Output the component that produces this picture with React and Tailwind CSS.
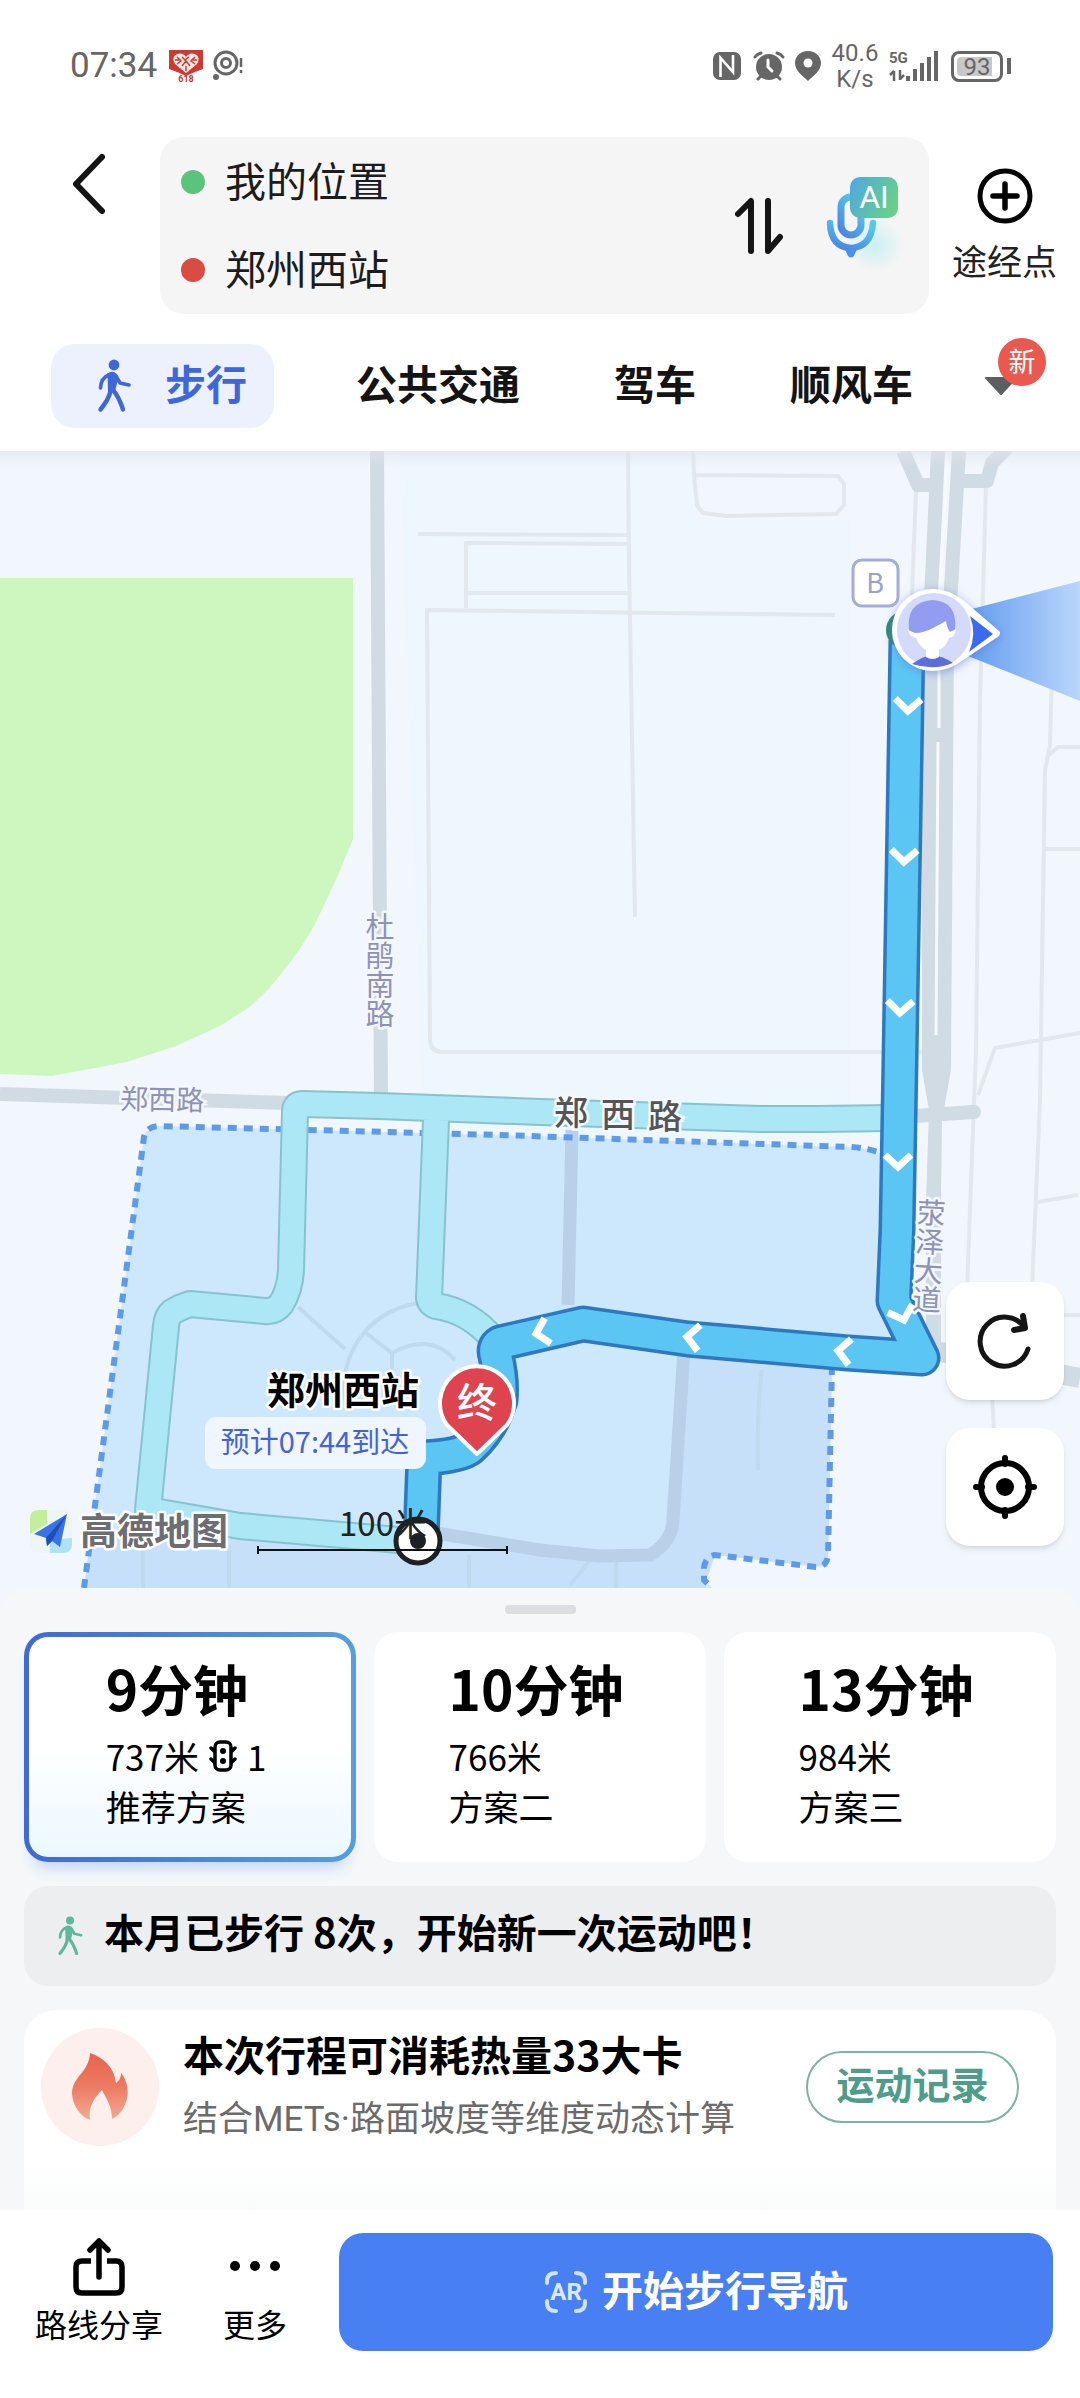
import React, { useState } from 'react';

// =========================================
// Data
// =========================================
const TABS = ['公共交通', '驾车', '顺风车'];

const PLANS = [
    { id: 1, time: '9分钟', distance: '737米', lights: 1, name: '推荐方案' },
    { id: 2, time: '10分钟', distance: '766米', name: '方案二' },
    { id: 3, time: '13分钟', distance: '984米', name: '方案三' },
];

// position and heading of the arrows drawn along the route
const ROUTE_ARROWS = [
    [908, 708, 2],
    [904, 859, 2],
    [900, 1010, 2],
    [898, 1164, 0],
    [903, 1317, -18],
    [841, 1351, 96],
    [690, 1337, 96],
    [539, 1333, 76],
];

const MAP_ROUTE =
    'M907 640 L900 1060 L897 1230 L894 1301 L922 1358 L848 1353 L688 1339 L583 1324 L500 1343 Q493 1347 496 1356 Q502 1380 500 1400 Q492 1428 470 1448 Q460 1456 424 1458 L421 1540';
const MAP_ALT_LEFT =
    'M890 1118 L820 1119 L760 1119 L540 1112 L379 1106 L302 1104 Q295 1104 295 1112 L291 1270 Q290 1290 281 1304 Q275 1312 265 1311 L190 1304 Q180 1307 172 1312 Q167 1316 166 1326 L148 1510 L240 1526 L410 1541';
const MAP_ALT_RIGHT = 'M436 1120 L429 1298 Q430 1304 436 1306 Q470 1311 494 1340';
const STATION_BORDER =
    'M84 1588 L144 1137 Q146 1127 158 1126 L500 1135 L850 1147 Q870 1148 882 1154';

// =========================================
// Icons
// =========================================
const WalkIcon = ({ className }) => (
    <svg viewBox="0 0 36 54" className={className} fill="none" stroke="currentColor" strokeLinecap="round" strokeLinejoin="round" aria-hidden="true">
        <circle cx="18" cy="6" r="5.4" fill="currentColor" stroke="none" />
        <path d="M11.500 14.500 Q17 11 20.500 15 L22 20 L19 33 L12 33 Z" fill="currentColor" stroke="none" />
        <path d="M12.500 16 Q5 19 4.500 29" strokeWidth="3.600" />
        <path d="M20 17 L24 24 L33 26" strokeWidth="3.600" />
        <path d="M14.500 32 Q13 40 4.500 50.500" strokeWidth="4.400" />
        <path d="M17 31 Q23 38 27 50.500" strokeWidth="4.400" />
    </svg>
);

const BackIcon = () => (
    <svg viewBox="0 0 36 62" className="w-9 h-[62px]" fill="none" stroke="#151515" strokeWidth="6" strokeLinecap="round" strokeLinejoin="round" aria-hidden="true">
        <path d="M31 4 L5 31 L31 58" />
    </svg>
);

const SwapIcon = () => (
    <svg viewBox="0 0 48 58" className="w-12 h-[58px]" fill="none" stroke="#151515" strokeWidth="6" strokeLinecap="round" strokeLinejoin="round" aria-hidden="true">
        <path d="M3 17 L16 4 V54" />
        <path d="M33 4 V54 L45 40" />
    </svg>
);

const AiMicIcon = () => (
    <svg viewBox="0 0 80 100" className="w-20 h-[100px]" fill="none" aria-hidden="true">
        <defs>
            <linearGradient id="mic" x1="0" y1="1" x2="0.600" y2="0">
                <stop offset="0" stopColor="#4a80e0" />
                <stop offset="1" stopColor="#55c8ef" />
            </linearGradient>
            <linearGradient id="ai" x1="0" y1="0" x2="1" y2="0.400">
                <stop offset="0" stopColor="#4fa6e6" />
                <stop offset="1" stopColor="#66cf8d" />
            </linearGradient>
            <radialGradient id="micGlow">
                <stop offset="0" stopColor="#bfeef0" stopOpacity="0.800" />
                <stop offset="1" stopColor="#bfeef0" stopOpacity="0" />
            </radialGradient>
        </defs>
        <circle cx="50" cy="72" r="28" fill="url(#micGlow)" />
        <rect x="16" y="24" width="20" height="38" rx="10" stroke="url(#mic)" strokeWidth="7" />
        <path d="M5 50 Q6 74 26 75 Q46 74 48 50" stroke="url(#mic)" strokeWidth="6.500" strokeLinecap="round" />
        <path d="M20 76 H32 L29 83 Q26 86 23 83 Z" fill="#4c90e6" />
        <rect x="25" y="4" width="48" height="41" rx="10" fill="url(#ai)" />
        <text x="49" y="35" textAnchor="middle" fontFamily="Roboto, sans-serif" fontSize="32" fill="#fff">AI</text>
    </svg>
);

const AddIcon = () => (
    <svg viewBox="0 0 56 56" className="w-14 h-14" fill="none" stroke="#050505" strokeWidth="5" strokeLinecap="round" aria-hidden="true">
        <circle cx="28" cy="28" r="25" />
        <path d="M28 16 V40 M16 28 H40" strokeWidth="5.500" />
    </svg>
);

const TrafficLightIcon = () => (
    <svg viewBox="0 0 28 32" className="w-7 h-8" fill="none" stroke="#000" strokeWidth="3.500" strokeLinecap="round" aria-hidden="true">
        <rect x="6" y="2" width="16" height="28" rx="5" />
        <path d="M5 11 L2 8 M5 22 L2 19 M23 11 L26 8 M23 22 L26 19" />
        <circle cx="14" cy="11" r="3" fill="#000" stroke="none" />
        <circle cx="14" cy="21" r="3" fill="#000" stroke="none" />
    </svg>
);

const FlameIcon = () => (
    <svg viewBox="0 0 56 68" className="w-14 h-[68px]" aria-hidden="true">
        <defs>
            <linearGradient id="flame" x1="0" y1="0" x2="0" y2="1">
                <stop offset="0" stopColor="#e8634c" />
                <stop offset="0.500" stopColor="#ec7a62" />
                <stop offset="1" stopColor="#f3ab93" />
            </linearGradient>
        </defs>
        <path d="M18 0 C32 5 42 14 44 30 C47 28 49 25 49 20 C56 28 57 40 54 49 C51 58 46 63 40 66 C40 54 35 47 30 37 C22 45 16 54 18 67 C8 63 1 53 0 41 C0 23 17 20 18 0 Z" fill="url(#flame)" />
    </svg>
);

const ShareIcon = () => (
    <svg viewBox="0 0 56 60" className="w-14 h-[60px]" fill="none" stroke="#000" strokeWidth="5.500" strokeLinecap="round" strokeLinejoin="round" aria-hidden="true">
        <path d="M20 24 H11 Q5 24 5 30 V50 Q5 56 11 56 H45 Q51 56 51 50 V30 Q51 24 45 24 H36" strokeLinecap="butt" />
        <path d="M28 40 V5 M19 13 L28 4 L37 13" />
    </svg>
);

const MoreIcon = () => (
    <svg viewBox="0 0 56 60" className="w-14 h-[60px]" aria-hidden="true">
        <circle cx="8" cy="29" r="5" />
        <circle cx="28" cy="29" r="5" />
        <circle cx="48" cy="29" r="5" />
    </svg>
);

const ArIcon = () => (
    <svg viewBox="0 0 44 44" className="w-11 h-11" fill="none" stroke="#cfe2ff" strokeWidth="4" strokeLinecap="round" aria-hidden="true">
        <path d="M3 13 V11 Q3 3 12 3 M32 3 Q41 3 41 11 V13 M41 31 V33 Q41 41 32 41 M12 41 Q3 41 3 33 V31" />
        <text x="22" y="30" textAnchor="middle" fontFamily="Roboto, sans-serif" fontWeight="700" fontSize="24" fill="#dbe9ff" stroke="none">AR</text>
    </svg>
);

const RefreshIcon = () => (
    <svg viewBox="0 0 56 56" className="w-14 h-14" fill="none" stroke="#151515" strokeWidth="5" strokeLinecap="round" strokeLinejoin="round" aria-hidden="true">
        <path d="M51 36 A24.500 24.500 0 1 1 48 15" />
        <path d="M46 3 L48 15 L37 17" strokeWidth="6" />
    </svg>
);

const LocateIcon = () => (
    <svg viewBox="0 0 64 64" className="w-16 h-16" fill="none" stroke="#000" strokeWidth="6" strokeLinecap="round" aria-hidden="true">
        <circle cx="32" cy="32" r="24" />
        <circle cx="32" cy="32" r="9" fill="#000" stroke="none" />
        <path d="M32 3 V9 M32 55 V61 M3 32 H9 M55 32 H61" />
    </svg>
);

// =========================================
// Status bar
// =========================================
const StatusBar = () => (
    <div className="flex items-center justify-between pt-9 pl-[70px] pr-[69px] font-[Roboto,sans-serif] text-[#666]">
        <div className="flex items-center h-[60px]">
            <span className="text-[35px] leading-10 w-[98px]">07:34</span>
            <svg viewBox="0 0 36 34" className="w-9 h-[34px]" aria-hidden="true">
                <path d="M1 1 H35 V20 L27 23 L18 27 L9 23 L1 20 Z" fill="#cf3a30" />
                <path d="M18 24 L7 15 Q3 8 9 5 Q15 3 18 8 Q21 3 27 5 Q33 8 29 15 Z" fill="#fbe9e6" />
                <path d="M9 8 L13 12 L9 15 M27 8 L23 12 L27 15 M14 17 L18 12 L22 17 M18 17 V22 M7 11 H11 M25 11 H29 M14 8 L17 11 L21 8" fill="none" stroke="#cf3a30" strokeWidth="1.500" />
                <text x="18" y="33" textAnchor="middle" fontSize="9" fontWeight="700" fill="#b8392f">618</text>
            </svg>
            <svg viewBox="0 0 32 32" className="w-8 h-8 ml-2" fill="none" stroke="#666" aria-hidden="true">
                <circle cx="14" cy="13" r="11" strokeWidth="3" />
                <circle cx="14" cy="13" r="4.500" strokeWidth="3" />
                <circle cx="4" cy="27" r="3" fill="#666" stroke="none" />
                <path d="M29 8 V17 M29 20 V23" strokeWidth="2.500" />
            </svg>
        </div>
        <div className="flex items-center h-[60px]">
            <svg viewBox="0 0 28 28" className="w-7 h-7" aria-hidden="true">
                <rect width="28" height="28" rx="7" fill="#666" />
                <path d="M7.500 25 V6 L20 20 V3" fill="none" stroke="#fff" strokeWidth="2.600" />
            </svg>
            <svg viewBox="0 0 32 30" className="w-8 h-[30px] ml-3" fill="none" stroke="#666" strokeWidth="3" strokeLinecap="round" aria-hidden="true">
                <circle cx="16" cy="16" r="13" fill="#666" stroke="none" />
                <path d="M2 6 Q4 3 8 2 M24 2 Q28 3 30 6 M5 28 L8 25 M27 28 L24 25" />
                <path d="M15 9 V16 L19 20" stroke="#fff" />
            </svg>
            <svg viewBox="0 0 26 30" className="w-[26px] h-[30px] ml-[10px]" aria-hidden="true">
                <path d="M13 0 C5 0 0 6 0 12 C0 20 8 25 13 30 C18 25 26 20 26 12 C26 6 21 0 13 0 Z" fill="#666" />
                <circle cx="13" cy="12" r="4.500" fill="#fff" />
            </svg>
            <div className="ml-[10px] w-[48px] text-center text-[24px] leading-[26px]">
                <div>40.6</div>
                <div>K/s</div>
            </div>
            <svg viewBox="0 0 50 32" className="w-[50px] h-8 ml-[10px]" fill="none" stroke="#666" strokeWidth="4" aria-hidden="true">
                <text x="0" y="13" fontSize="15" fontWeight="700" fill="#666" stroke="none">5G</text>
                <path d="M5 21 V31 M11 20 V30" strokeWidth="2.500" />
                <path d="M5 21 L1 25 M11 29 L15 25" strokeWidth="2.500" />
                <path d="M19 31 V26 M26 31 V19 M33 31 V13 M40 31 V7 M47 31 V1" />
            </svg>
            <div className="ml-3 flex items-center gap-1">
                <div className="w-[52px] h-[31px] rounded-lg border-[3px] border-[#666] p-[3px]">
                    <div className="h-[19px] rounded-sm bg-[linear-gradient(90deg,#c8c8c8_88%,#fff_88%)] text-center text-[24px] leading-[20px]">93</div>
                </div>
                <span className="w-1 h-4 bg-[#666]" />
            </div>
        </div>
    </div>
);

// =========================================
// Header: route form and travel modes
// =========================================
const PlaceField = ({ label, dotClass, value, onChange }) => (
    <label className="flex items-center h-[88px] pl-[21px]">
        <span className={`w-6 h-6 rounded-full ${dotClass}`} />
        <input
            type="text"
            aria-label={label}
            value={value}
            onChange={onChange}
            className="ml-[20px] w-[400px] pb-[6px] bg-transparent text-[41px] leading-[60px] text-[#1c1c1c] focus:outline-none"
        />
    </label>
);

const RouteForm = () => {
    const [from, setFrom] = useState('我的位置');
    const [to, setTo] = useState('郑州西站');

    const swap = () => {
        setFrom(to);
        setTo(from);
    };

    return (
        <div className="flex mt-[41px]">
            <button type="button" aria-label="返回" className="w-40 h-[94px] pl-[71px]">
                <BackIcon />
            </button>
            <div className="flex-1 flex items-center h-[177px] rounded-[24px] bg-[#f5f5f5]">
                <div className="flex-1">
                    <PlaceField label="起点" dotClass="bg-[#5bc37b]" value={from} onChange={(e) => setFrom(e.target.value)} />
                    <PlaceField label="终点" dotClass="bg-[#db4c40]" value={to} onChange={(e) => setTo(e.target.value)} />
                </div>
                <button type="button" aria-label="交换起终点" onClick={swap}>
                    <SwapIcon />
                </button>
                <button type="button" aria-label="AI语音" className="ml-[42px] mr-6 pb-[6px]">
                    <AiMicIcon />
                </button>
            </div>
            <button type="button" className="w-[151px] flex flex-col items-center justify-center gap-3">
                <AddIcon />
                <span className="text-[35px] leading-[48px] text-[#222]">途经点</span>
            </button>
        </div>
    );
};

const ModeTabs = () => (
    <nav className="flex items-center mt-[30px] pl-[51px] pb-[23px] text-[41px] leading-[60px] font-bold text-[#141414]">
        <button type="button" className="flex items-center gap-[33px] h-[84px] pl-[45px] pr-[27px] mr-[35px] rounded-[24px] bg-[#edf1fd] text-[#3f67d8]">
            <WalkIcon className="w-9 h-[54px]" />
            <span className="pb-2">步行</span>
        </button>
        {TABS.map((tab) => (
            <button key={tab} type="button" className="px-[47px] pb-2">
                {tab}
            </button>
        ))}
        <button type="button" aria-label="更多出行方式" className="relative ml-6 w-[70px] h-[84px]">
            <svg viewBox="0 0 34 18" className="w-[34px] h-[18px]" aria-hidden="true">
                <path d="M2 1 H32 L17 17 Z" fill="#5d5e62" stroke="#5d5e62" strokeWidth="2" strokeLinejoin="round" />
            </svg>
            <span className="absolute top-[-6px] left-[14px] w-12 h-12 rounded-full bg-[#e95950] text-white text-[27px] leading-[46px] font-normal">新</span>
        </button>
    </nav>
);

// =========================================
// Map
// =========================================
const VerticalLabel = ({ children, x, y, angle = 0 }) => (
    <text
        x={x}
        y={y}
        transform={`rotate(${angle} ${x} ${y})`}
        className="[writing-mode:vertical-rl]"
        fontSize="29"
        fill="#8d93b6"
        stroke="#f4f8fe"
        strokeWidth="5"
        paintOrder="stroke"
        strokeLinejoin="round"
    >
        {children}
    </text>
);

const MapCanvas = () => (
    <svg viewBox="0 451 1080 1165" className="block w-full h-auto" fill="none" role="img" aria-label="步行路线地图">
        <defs>
            <linearGradient id="cone" x1="0" y1="0" x2="1" y2="0">
                <stop offset="0" stopColor="#5d98ee" />
                <stop offset="1" stopColor="#bad7fc" />
            </linearGradient>
            <filter id="markerGlow" x="-30%" y="-30%" width="160%" height="160%">
                <feDropShadow dx="0" dy="2" stdDeviation="5" floodColor="#5a78d8" floodOpacity="0.600" />
            </filter>
        </defs>

        <rect y="451" width="1080" height="1165" fill="#f2f7fe" />
        <path d="M400 451 H700 V520 H850 V1160 H425 Z" fill="#eef6fe" />
        <path d="M0 578 H353 V839 L336 880 L315 924 Q302 948 284 970 Q268 992 248 1008 L220 1026 L176 1046 L127 1062 L52 1076 L0 1074 Z" fill="#cdf7bf" />

        {/* small streets */}
        <g stroke="#e2e8ed" strokeWidth="4" strokeLinejoin="round">
            <path d="M418 534 L628 535 M628 544 L466 543 V608 M466 593 H628" />
            <path d="M835 615 L427 610 L430 1040 Q431 1052 442 1052 H922" />
            <path d="M628 451 L629 560 L635 917" />
            <path d="M693 451 L694 475 L697 505 L703 513 L727 516 L836 514 L844 505 V484 L838 476 L694 475" />
            <path d="M916 490 L911 620 M986 485 L980 700 L976 1050 L967 1290" />
            <path d="M1080 652 L1058 655 Q1052 658 1052 668 L1050 745 L1045 770 L1040 1100 L1032 1290" />
            <path d="M1080 747 H1058 L1048 756 M1042 849 H1080 M1080 1033 L995 1048 L978 1095 M1038 1202 L1078 1195" />
            <path d="M1060 1315 H1080 M992 1395 L994 1430" />
        </g>

        {/* main roads */}
        <g stroke="#d1dbe4" strokeWidth="14" strokeLinejoin="round">
            <path d="M377 451 L381 1100 M0 1094 L290 1103 M915 1116 L973 1112" />
            <path d="M903 451 L918 485 H932 M1008 447 L992 463 L987 481 H964" />
            <path d="M938 451 L929 640 V690 M959 451 L948 640" />
            <path d="M930 1350 L1080 1378" strokeWidth="20" />
            <path d="M973 1112 h1" strokeLinecap="round" />
        </g>
        <path d="M922 640 H954 L951 1070 L942 1120 L941 1200 V1360 H926 V1200 L929 1110 L922 1070 Z" fill="#d1dbe4" />
        <path d="M948 451 L939 600 V728 M938 742 L936 1035" stroke="#f6f9fd" strokeWidth="3" />

        {/* station grounds */}
        <path d={`${STATION_BORDER} L890 1340 L832 1366 L828 1555 Q827 1567 816 1567 L715 1555 Q705 1557 704 1568 V1580 L712 1588 Z`} fill="#cde7fc" />
        <path d="M690 1345 L832 1360 L828 1567 L715 1555 L704 1588 H84 L92 1530 L420 1548 L650 1556 L672 1545 Z" fill="#c7e0fa" />
        <g stroke="#bfd9ee" strokeWidth="4">
            <path d="M298 1307 L345 1349 M366 1333 L392 1353 M762 1370 Q757 1400 758 1470 M143 1530 V1588 M229 1545 V1588 M469 1555 V1588 M616 1560 V1588 M590 1560 L570 1585" />
            <path d="M345 1400 A85 85 0 0 1 420 1303 M392 1400 V1353 Q430 1332 455 1360" />
        </g>
        <g stroke="#b8d1e9" strokeWidth="13" strokeLinejoin="round">
            <path d="M572 1130 L568 1305" />
            <path d="M684 1350 L673 1520 Q672 1542 650 1555 L600 1556 L540 1550 L430 1532" />
        </g>
        <path d={STATION_BORDER} stroke="#5e9be6" strokeWidth="6" strokeDasharray="9 7" />
        <path d="M832 1366 L828 1555 Q827 1567 816 1567 L715 1555 Q705 1557 704 1568 V1580 L712 1588" stroke="#5e9be6" strokeWidth="6" strokeDasharray="9 7" />

        {/* alternative routes */}
        <g strokeLinejoin="round">
            <path d={MAP_ALT_LEFT} stroke="#86c3cf" strokeWidth="28" />
            <path d={MAP_ALT_RIGHT} stroke="#86c3cf" strokeWidth="28" />
            <path d={MAP_ALT_LEFT} stroke="#ace7f5" strokeWidth="24" />
            <path d={MAP_ALT_RIGHT} stroke="#ace7f5" strokeWidth="24" />
        </g>

        {/* selected route */}
        <g strokeLinejoin="round">
            <path d={MAP_ROUTE} stroke="#2d78bf" strokeWidth="37" />
            <path d={MAP_ROUTE} stroke="#5bc6f4" strokeWidth="30" />
        </g>
        <g stroke="#fff" strokeWidth="7">
            {ROUTE_ARROWS.map(([x, y, angle]) => (
                <path key={y} d="M-13 -9 L0 3 L13 -9" transform={`translate(${x} ${y}) rotate(${angle})`} />
            ))}
        </g>

        {/* road names */}
        <VerticalLabel x={380} y={912}>杜鹃南路</VerticalLabel>
        <VerticalLabel x={932} y={1198} angle={3}>荥泽大道</VerticalLabel>
        <text x="120" y="1109" transform="rotate(1 120 1109)" fontSize="28" fill="#8d93b6" stroke="#f4f8fe" strokeWidth="5" paintOrder="stroke">郑西路</text>
        <g fontSize="34" fontWeight="500" fill="#555" stroke="#f4f8fe" strokeWidth="5" paintOrder="stroke" textAnchor="middle">
            <text x="571" y="1125">郑</text>
            <text x="618" y="1127">西</text>
            <text x="665" y="1129">路</text>
        </g>

        {/* start point and current position */}
        <path d="M960 612 L1080 581 V701 L968 656 Z" fill="url(#cone)" />
        <circle cx="905" cy="630" r="19" fill="#2f8a6c" />
        <g transform="translate(-2 0)">
            <path d="M935 589 A41 41 0 1 0 935 671 Q950 671 965 660 L1001 636 Q1003 633 1001 631 L965 600 Q950 589 935 589 Z" fill="#fff" filter="url(#markerGlow)" />
            <path d="M972 616 L995 634 L971 652 Q979 634 972 616 Z" fill="#3b6af0" />
            <circle cx="936" cy="630" r="37" fill="#d4dafa" />
            <path d="M914 664 Q925 656 934 655 Q945 656 955 663 Q936 671 914 664 Z" fill="#5d6edb" />
            <path d="M911 630 Q908 602 934 600 Q960 601 957 630 Q957 638 950 638 H918 Q912 637 911 630 Z" fill="#929df0" />
            <path d="M910 630 L917 633 Q926 633 937 627 L948 621 Q949 628 952 632 L958 629 Q957 638 951 638 Q948 647 941 650 V657 Q934 661 928 657 V650 Q921 646 918 638 Q912 638 910 630 Z" fill="#fff" />
        </g>
        <rect x="853" y="560" width="45" height="46" rx="9" fill="#fff" stroke="#a3add8" strokeWidth="3" />
        <text x="875" y="593" textAnchor="middle" fontSize="27" fill="#98a2cc">B</text>

        {/* destination */}
        <text x="267" y="1404" fontSize="38" fontWeight="700" fill="#000" stroke="#fff" strokeWidth="5" paintOrder="stroke" strokeLinejoin="round">郑州西站</text>
        <rect x="205" y="1417" width="221" height="52" rx="11" fill="#eff6fe" />
        <text x="315" y="1453" textAnchor="middle" fontSize="29" fill="#4663d6">预计07:44到达</text>
        <path d="M477 1454 L447 1425 A37 37 0 1 1 507 1425 Z" fill="#de4350" stroke="#fff" strokeWidth="4" strokeLinejoin="round" />
        <text x="477" y="1417" textAnchor="middle" fontSize="40" fontWeight="500" fill="#fff">终</text>

        {/* scale and brand */}
        <circle cx="418" cy="1541" r="22" fill="#fff" stroke="#1d2125" strokeWidth="5" />
        <circle cx="418" cy="1541" r="8" fill="#1d2125" />
        <text x="339" y="1536" fontSize="33" fill="#222">100米</text>
        <path d="M257 1550 H508 M258 1546 V1554 M507 1546 V1554" stroke="#111" strokeWidth="2" />
        <rect x="30" y="1510" width="42" height="43" rx="9" fill="#edf6f4" />
        <path d="M30 1534 V1519 Q30 1510 39 1510 H47 V1524 Z" fill="#c3ef9d" />
        <path d="M50 1553 V1540 L72 1538 V1544 Q72 1553 63 1553 Z" fill="#aee3f6" />
        <path d="M67 1514 L34 1534 L46 1538 L47 1546 L52 1541 L60 1547 Z" fill="#3874e6" />
        <path d="M67 1514 L46 1538 L47 1546 L52 1541 Z" fill="#1d50b4" />
        <text x="80" y="1545" fontSize="37" fontWeight="700" fill="#6c6e72" stroke="#fff" strokeWidth="5" paintOrder="stroke" strokeLinejoin="round">高德地图</text>
    </svg>
);

const MapView = () => (
    <section className="relative">
        <MapCanvas />
        <div className="absolute inset-x-0 top-0 h-4 bg-linear-to-b from-[#dfe3ec] to-transparent opacity-60" />
        <div className="absolute right-4 bottom-[70px] flex flex-col gap-7">
            <button type="button" aria-label="刷新路线" className="w-[118px] h-[118px] flex items-center justify-center rounded-[24px] bg-white shadow-md">
                <RefreshIcon />
            </button>
            <button type="button" aria-label="定位" className="w-[118px] h-[118px] flex items-center justify-center rounded-[24px] bg-white shadow-md">
                <LocateIcon />
            </button>
        </div>
    </section>
);

// =========================================
// Bottom sheet
// =========================================
const PlanCard = ({ plan, selected, onSelect }) => (
    <button
        type="button"
        aria-pressed={selected}
        onClick={onSelect}
        className={`flex-1 h-[230px] flex justify-center rounded-[24px] border-[5px] border-transparent pt-[6px] pr-2 text-left text-black ${
            selected
                ? '[background:linear-gradient(180deg,#fff_50%,#ecf8ff)_padding-box,linear-gradient(90deg,#4169d6,#559fdc)_border-box] shadow-[0_14px_14px_-8px_#c3d6f8]'
                : 'bg-white'
        }`}
    >
        <span className="block">
            <span className="block text-[55px] leading-[88px] font-bold">{plan.time}</span>
            <span className="flex items-center text-[35px] leading-[50px]">
                {plan.distance}
                {plan.lights && (
                    <>
                        <span className="mx-[10px]"><TrafficLightIcon /></span>
                        {plan.lights}
                    </>
                )}
            </span>
            <span className="block text-[35px] leading-[50px]">{plan.name}</span>
        </span>
    </button>
);

const CalorieCard = () => (
    <div className="mt-6 flex items-start h-[200px] pt-3 pl-[17px] pr-[37px] rounded-t-[32px] bg-[linear-gradient(#fff_75%,#fafbfb)]">
        <div className="mt-[6px] w-[118px] h-[118px] shrink-0 flex items-center justify-center rounded-full bg-[#fcefec]">
            <FlameIcon />
        </div>
        <div className="ml-[24px] flex-1">
            <h2 className="text-[41px] leading-[62px] font-bold text-black">本次行程可消耗热量33大卡</h2>
            <p className="text-[35px] leading-[64px] text-[#6b6b6b]">
                结合<span className="font-[Roboto,sans-serif]">METs·</span>路面坡度等维度动态计算
            </p>
        </div>
        <button type="button" className="mt-[29px] w-[213px] h-[72px] pb-2 shrink-0 rounded-full border-2 border-[#7db3a4] text-[38px] leading-[60px] font-bold text-[#4d9d8a]">
            运动记录
        </button>
    </div>
);

const RouteSheet = () => {
    const [selectedId, setSelectedId] = useState(1);

    return (
        <section className="relative -mt-7 px-6 rounded-t-[28px] bg-[#f5f7f9]">
            <div className="pt-[17px] pb-[18px]">
                <div className="mx-auto w-[71px] h-[9px] rounded bg-[#dcdee1]" />
            </div>
            <div className="flex gap-[18px]">
                {PLANS.map((plan) => (
                    <PlanCard
                        key={plan.id}
                        plan={plan}
                        selected={plan.id === selectedId}
                        onSelect={() => setSelectedId(plan.id)}
                    />
                ))}
            </div>
            <div className="mt-6 flex items-center h-[100px] pl-8 rounded-[24px] bg-[#eceeef]">
                <WalkIcon className="w-[28px] h-[40px] text-[#5fb89c]" />
                <p className="ml-5 pb-[10px] text-[40px] leading-[60px] font-bold text-black">本月已步行 8次，开始新一次运动吧！</p>
            </div>
            <CalorieCard />
        </section>
    );
};

const ActionBar = () => (
    <footer className="flex pt-[23px] pb-12 pl-[35px] pr-[27px] bg-white text-[32px] leading-[44px] text-black">
        <button type="button" className="w-32 h-[118px] flex flex-col items-center gap-1 pt-1">
            <ShareIcon />
            路线分享
        </button>
        <button type="button" className="w-16 h-[118px] ml-[60px] flex flex-col items-center gap-1 pt-1">
            <MoreIcon />
            更多
        </button>
        <button type="button" className="ml-[52px] flex-1 h-[118px] flex items-center justify-center gap-[14px] rounded-[24px] bg-[#4880f3] text-[41px] leading-[60px] font-bold text-white">
            <ArIcon />
            <span className="pb-2">开始步行导航</span>
        </button>
    </footer>
);

export default function App() {
    return (
        <main className="bg-white font-['Noto_Sans_CJK_SC',sans-serif]">
            <header>
                <StatusBar />
                <RouteForm />
                <ModeTabs />
            </header>
            <MapView />
            <RouteSheet />
            <ActionBar />
        </main>
    );
}
